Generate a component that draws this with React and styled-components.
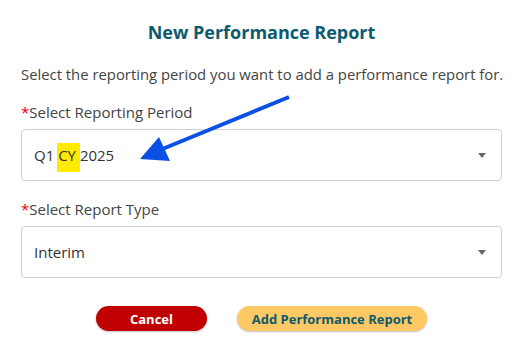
import React from "react";
import styled, { createGlobalStyle } from "styled-components";

const Global = createGlobalStyle`
  html, body { margin: 0; padding: 0; background: #fff; }
  body { font-family: "Open Sans", "Noto Sans", sans-serif; }
  * { box-sizing: border-box; }
`;

const Page = styled.div`
  position: relative;
  width: 521px;
  height: 348px;
  padding: 20px 19px 0 21px;
  overflow: hidden;
`;

const Title = styled.h2`
  margin: 0;
  text-align: center;
  font-size: 18px;
  line-height: 24px;
  font-weight: 700;
  color: #0d5a6e;
`;

const Intro = styled.p`
  margin: 19px 0 0;
  font-size: 14.85px;
  line-height: 22px;
  color: #444;
  white-space: nowrap;
`;

const Field = styled.div`
  display: flex;
  flex-direction: column;
  gap: 6px;
  margin-top: ${(p) => p.$top}px;
`;

const Label = styled.label`
  font-size: 15px;
  line-height: 22px;
  font-weight: 500;
  color: #444;
`;

const Star = styled.span`
  color: #e00;
`;

const SelectBox = styled.div`
  height: 52px;
  border: 1px solid #cfcfcf;
  border-radius: 4px;
  display: flex;
  align-items: center;
  justify-content: space-between;
  padding: 0 15px 0 12px;
  font-size: 15px;
  color: #333;
`;

const Mark = styled.span`
  background: #ffeb00;
  padding: 2px 0 7px;
  margin-left: -1px;
  padding-left: 1px;
`;

const Caret = styled.span`
  width: 0;
  height: 0;
  border-left: 4px solid transparent;
  border-right: 4px solid transparent;
  border-top: 5px solid #666;
`;

const Actions = styled.div`
  display: flex;
  justify-content: center;
  gap: 30px;
  margin-top: 28px;
`;

const Button = styled.button`
  height: 25px;
  width: ${(p) => p.$w}px;
  border: none;
  border-radius: 13px;
  font-family: inherit;
  font-size: 13px;
  font-weight: 700;
  background: ${(p) => (p.$primary ? "#fec865" : "#c00000")};
  color: ${(p) => (p.$primary ? "#0d5a6e" : "#fff")};
  box-shadow: 0 1px 2px rgba(0, 0, 0, 0.25);
  cursor: pointer;
`;

const Arrow = styled.svg`
  position: absolute;
  left: 0;
  top: 0;
  pointer-events: none;
`;

export default function App() {
  return (
    <>
      <Global />
      <Page>
        <Title>New Performance Report</Title>
        <Intro>Select the reporting period you want to add a performance report for.</Intro>
        <Field $top={16}>
          <Label><Star>*</Star>Select Reporting Period</Label>
          <SelectBox>
            <span>Q1 <Mark>CY </Mark>2025</span>
            <Caret />
          </SelectBox>
        </Field>
        <Field $top={17}>
          <Label><Star>*</Star>Select Report Type</Label>
          <SelectBox>
            <span>Interim</span>
            <Caret />
          </SelectBox>
        </Field>
        <Actions>
          <Button $w={111}>Cancel</Button>
          <Button $w={190} $primary>Add Performance Report</Button>
        </Actions>
        <Arrow width="521" height="348" viewBox="0 0 521 348">
          <line x1="289" y1="97" x2="160" y2="150" stroke="#0a50e4" strokeWidth="4" />
          <polygon points="140,159 159,137 170,161" fill="#0a50e4" />
        </Arrow>
      </Page>
    </>
  );
}
